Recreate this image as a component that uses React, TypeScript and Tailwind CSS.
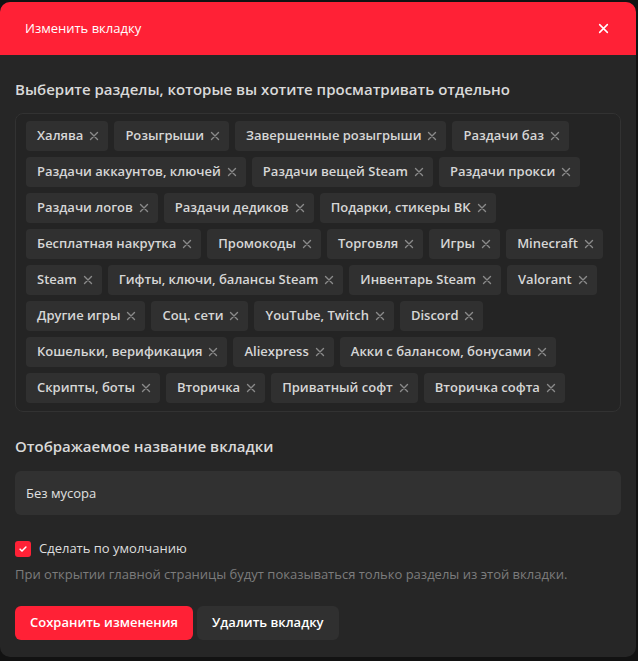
import { useState } from "react";

const sections = [
  "Халява",
  "Розыгрыши",
  "Завершенные розыгрыши",
  "Раздачи баз",
  "Раздачи аккаунтов, ключей",
  "Раздачи вещей Steam",
  "Раздачи прокси",
  "Раздачи логов",
  "Раздачи дедиков",
  "Подарки, стикеры ВК",
  "Бесплатная накрутка",
  "Промокоды",
  "Торговля",
  "Игры",
  "Minecraft",
  "Steam",
  "Гифты, ключи, балансы Steam",
  "Инвентарь Steam",
  "Valorant",
  "Другие игры",
  "Соц. сети",
  "YouTube, Twitch",
  "Discord",
  "Кошельки, верификация",
  "Aliexpress",
  "Акки с балансом, бонусами",
  "Скрипты, боты",
  "Вторичка",
  "Приватный софт",
  "Вторичка софта",
];

const Cross = ({ className }: { className?: string }) => (
  <svg viewBox="0 0 10 10" className={className} fill="none">
    <path d="M1.5 1.5l7 7M8.5 1.5l-7 7" stroke="currentColor" strokeWidth="1.4" strokeLinecap="round" />
  </svg>
);

const App = () => {
  const [tags, setTags] = useState(sections);
  const [isDefault, setIsDefault] = useState(true);
  const [name, setName] = useState("Без мусора");

  return (
    <div className="min-h-[661px] w-[638px] bg-[#121212] pt-[2px] pb-[2px] font-['Open_Sans',sans-serif]">
      <div className="mr-[2px] overflow-hidden rounded-[10px] bg-[#262626]">
        <div className="flex h-[53px] items-center justify-between bg-[#ff2136] pl-[25px] pr-[27px]">
          <h2 className="text-[13px] text-white">Изменить вкладку</h2>
          <button className="text-white">
            <Cross className="size-[11px]" />
          </button>
        </div>

        <div className="px-[15px] pt-[24px] pb-[17px]">
          <h3 className="text-[15px] leading-5 font-semibold text-[#d9d9d9]">
            Выберите разделы, которые вы хотите просматривать отдельно
          </h3>

          <div className="mt-[14px] flex flex-wrap gap-[6px] rounded-[8px] border border-[#323232] bg-[#242424] px-[10px] pt-[7px] pb-[8px]">
            {tags.map((t) => (
              <div
                key={t}
                className="flex h-[30px] items-center gap-[6px] rounded-[4px] bg-[#303030] pl-[11px] pr-[9px] text-[13px] font-semibold text-[#d6d6d6]"
              >
                <span>{t}</span>
                <button
                  className="text-[#8a8a8a]"
                  onClick={() => setTags(tags.filter((x) => x !== t))}
                >
                  <Cross className="size-[10px]" />
                </button>
              </div>
            ))}
          </div>

          <h3 className="mt-[24px] text-[15px] leading-5 font-semibold text-[#d9d9d9]">
            Отображаемое название вкладки
          </h3>

          <input
            value={name}
            onChange={(e) => setName(e.target.value)}
            className="mt-[15px] h-[44px] w-full rounded-[6px] bg-[#313131] px-[11px] text-[13px] text-[#e0e0e0] outline-none"
          />

          <label className="mt-[24px] flex items-center gap-[8px] text-[13px] text-[#dedede]">
            <span
              className="flex size-[16px] items-center justify-center rounded-[3px] bg-[#ff2136]"
              onClick={() => setIsDefault(!isDefault)}
            >
              {isDefault && (
                <svg viewBox="0 0 12 12" className="size-[10px]" fill="none">
                  <path d="M2.5 6.2l2.3 2.3 4.7-4.9" stroke="white" strokeWidth="1.8" strokeLinecap="round" strokeLinejoin="round" />
                </svg>
              )}
            </span>
            Сделать по умолчанию
          </label>
          <p className="mt-[6px] text-[13px] text-[#7c7c7c]">
            При открытии главной страницы будут показываться только разделы из этой вкладки.
          </p>

          <div className="mt-[22px] flex gap-[4px]">
            <button className="h-[34px] rounded-[6px] bg-[#ff2136] px-[15px] text-[13px] font-semibold text-white">
              Сохранить изменения
            </button>
            <button className="h-[34px] rounded-[6px] bg-[#303030] px-[15px] text-[13px] font-semibold text-white">
              Удалить вкладку
            </button>
          </div>
        </div>
      </div>
    </div>
  );
};

export default App;
